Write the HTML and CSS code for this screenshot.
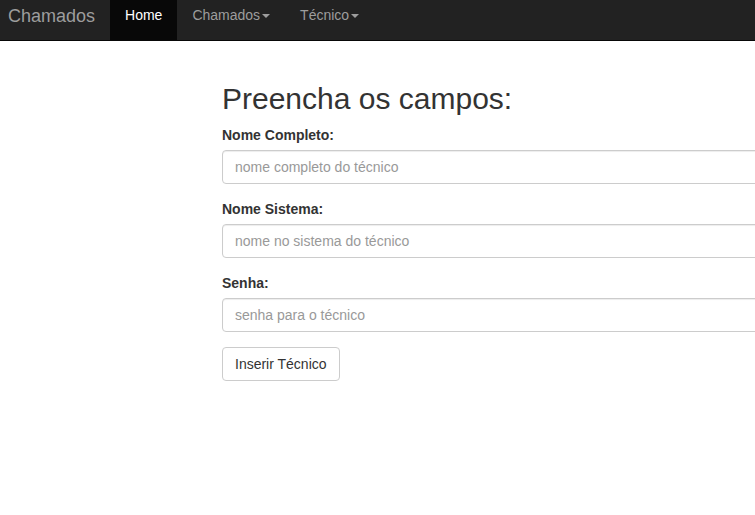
FILE: index.html
```html
<!DOCTYPE html>
<html lang="pt-BR">
<head>
<meta charset="utf-8">
<title>Chamados</title>
<link rel="stylesheet" href="styles.css">
</head>
<body>
<nav class="navbar">
  <a class="brand" href="#">Chamados</a>
  <ul class="nav">
    <li class="active"><a href="#">Home</a></li>
    <li><a href="#">Chamados<span class="caret"></span></a></li>
    <li><a href="#">Técnico<span class="caret"></span></a></li>
  </ul>
</nav>
<main class="page">
  <h2 class="title">Preencha os campos:</h2>
  <form class="form">
    <div class="form-group">
      <label class="label" for="nome">Nome Completo:</label>
      <input class="input" id="nome" type="text" placeholder="nome completo do técnico">
    </div>
    <div class="form-group">
      <label class="label" for="sistema">Nome Sistema:</label>
      <input class="input" id="sistema" type="text" placeholder="nome no sistema do técnico">
    </div>
    <div class="form-group">
      <label class="label" for="senha">Senha:</label>
      <input class="input" id="senha" type="password" placeholder="senha para o técnico">
    </div>
    <button class="btn" type="button">Inserir Técnico</button>
  </form>
</main>
</body>
</html>
```
FILE: styles.css
```css
html, body {
  margin: 0;
  padding: 0;
  overflow: hidden;
  background: #fff;
}
body {
  font-family: "Liberation Sans", Arial, Helvetica, sans-serif;
  font-size: 14px;
  line-height: 20px;
  color: #333;
}
.navbar {
  display: flex;
  height: 40px;
  background: #222;
  border-bottom: 1px solid #080808;
}
.brand {
  display: block;
  padding: 6px 15px 14px 8px;
  font-size: 18px;
  line-height: 20px;
  color: #9d9d9d;
  text-decoration: none;
}
.nav {
  display: flex;
  list-style: none;
  margin: 0;
  padding: 0;
}
.nav a {
  display: block;
  height: 40px;
  box-sizing: border-box;
  padding: 5px 15px 15px;
  line-height: 20px;
  color: #9d9d9d;
  text-decoration: none;
}
.nav .active a {
  background: #080808;
  color: #fff;
}
.caret {
  display: inline-block;
  width: 0;
  height: 0;
  margin-left: 2px;
  vertical-align: middle;
  border-top: 4px solid;
  border-left: 4px solid transparent;
  border-right: 4px solid transparent;
}
.page {
  padding: 41px 0 0 222px;
}
.title {
  margin: 0 0 10px;
  font-size: 30px;
  line-height: 33px;
  font-weight: 500;
  color: #333;
}
.form-group {
  margin-bottom: 15px;
}
.label {
  display: block;
  margin-bottom: 5px;
  font-weight: bold;
}
.input {
  display: block;
  box-sizing: border-box;
  width: 600px;
  height: 34px;
  padding: 6px 12px;
  font-family: inherit;
  font-size: 14px;
  line-height: 20px;
  color: #555;
  background: #fff;
  border: 1px solid #ccc;
  border-radius: 4px;
  box-shadow: inset 0 1px 1px rgba(0,0,0,.075);
}
.input::placeholder {
  color: #999;
}
.btn {
  display: inline-block;
  height: 34px;
  padding: 6px 12px;
  font-family: inherit;
  font-size: 14px;
  line-height: 20px;
  color: #333;
  background: #fff;
  border: 1px solid #ccc;
  border-radius: 4px;
}
```
